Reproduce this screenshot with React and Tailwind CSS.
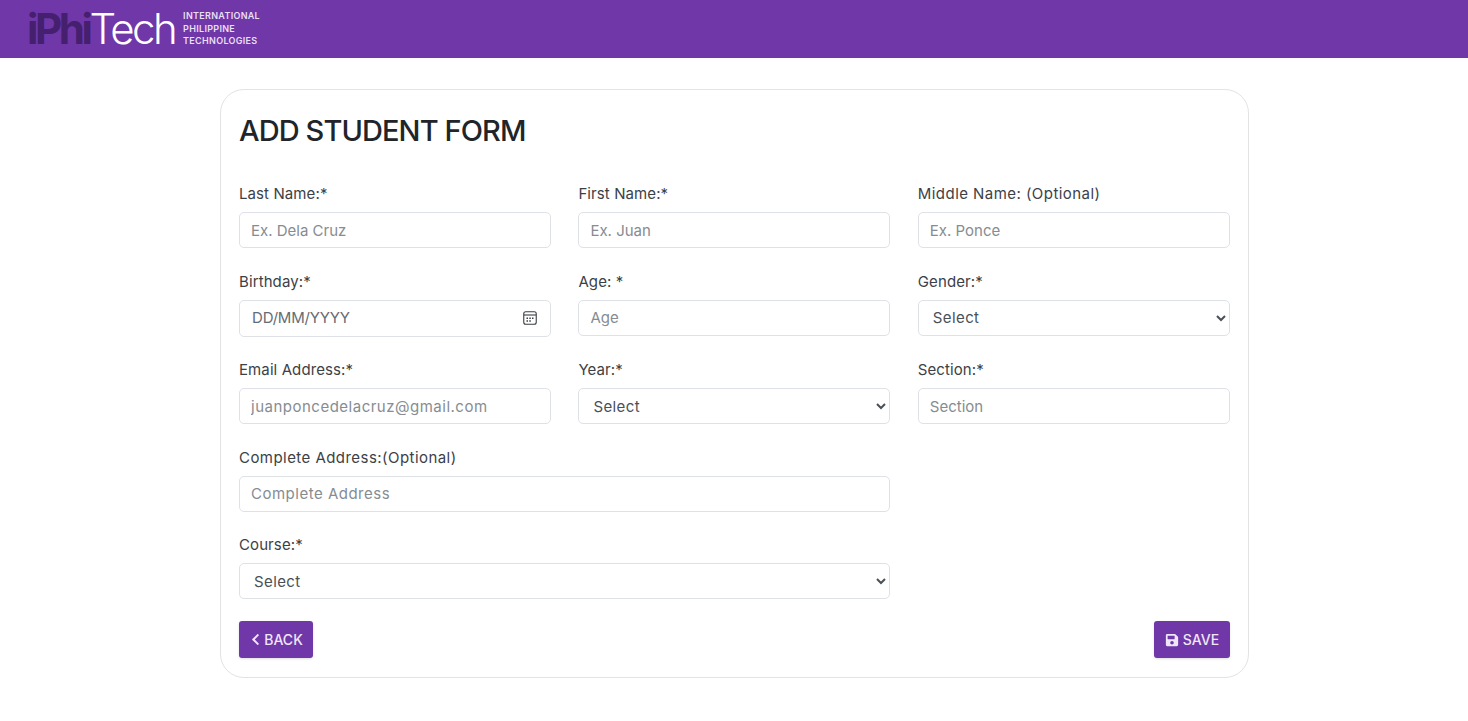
import { FaSave, FaChevronLeft } from "react-icons/fa";

const inputClass =
  "w-full h-[36px] rounded-[5px] border border-[#dee2e6] bg-white px-[11px] text-[15px] text-[#495057] outline-none placeholder:text-[#868c92]";
const selectClass =
  "w-full h-[36px] rounded-[5px] border border-[#dee2e6] bg-white pl-[10px] pr-[4px] text-[15px] tracking-[0.4px] text-[#495057] outline-none";

function Field({ label, wideLabel, className = "", children }) {
  return (
    <div className={`flex flex-col ${className}`}>
      <label
        className={`h-[24px] mb-[6px] text-[15px] leading-[24px] text-[#3c4146] ${
          wideLabel ? "tracking-[0.45px]" : "tracking-[0.1px]"
        }`}
      >
        {label}
      </label>
      {children}
    </div>
  );
}

function TextField({ label, placeholder, wideLabel, widePlaceholder, className }) {
  return (
    <Field label={label} wideLabel={wideLabel} className={className}>
      <input
        type="text"
        placeholder={placeholder}
        className={`${inputClass} ${widePlaceholder ? "tracking-[0.5px]" : ""}`}
      />
    </Field>
  );
}

function SelectField({ label, className }) {
  return (
    <Field label={label} className={className}>
      <select className={selectClass} defaultValue="">
        <option value="">Select</option>
      </select>
    </Field>
  );
}

function CalendarIcon() {
  return (
    <svg width="14" height="14" viewBox="0 0 14 14" fill="none" className="shrink-0">
      <rect x="0.75" y="0.75" width="12.5" height="12.5" rx="2" stroke="#3a3e43" strokeWidth="1.1" />
      <path d="M1 4h12" stroke="#3a3e43" strokeWidth="1.1" />
      <path d="M3.5 6.5h1.5v1.5H3.5zM6.3 6.5h1.5v1.5H6.3zM9 6.5h1.5v1.5H9zM3.5 9.2h1.5v1.5H3.5zM6.3 9.2h1.5v1.5H6.3z" fill="#3a3e43" />
    </svg>
  );
}

function Logo() {
  return (
    <div className="flex items-center ml-[27px]">
      <div className="text-[42px] leading-[58px] font-['Inter',sans-serif]">
        <span className="font-bold tracking-[-3.4px] text-[#45206f]">iPhi</span>
        <span className="font-light tracking-[-2.6px] text-white">Tech</span>
      </div>
      <div className="ml-[8px] flex flex-col text-[9px] leading-[12.5px] font-semibold tracking-[0.3px] text-[#e9dff5]">
        <span>INTERNATIONAL</span>
        <span>PHILIPPINE</span>
        <span>TECHNOLOGIES</span>
      </div>
    </div>
  );
}

export default function App() {
  return (
    <div className="min-h-[721px] bg-white font-['Inter','Liberation_Sans',sans-serif]">
      <header className="h-[58px] bg-[#7037a8] flex items-center">
        <Logo />
      </header>

      <main className="pt-[31px] pl-[220px]">
        <div className="w-[1029px] h-[589px] rounded-[24px] border border-[#e3e3e3] px-[18px] pt-[21px]">
          <h1 className="text-[29px] leading-[40px] font-medium text-[#212529] tracking-[-0.9px]">ADD STUDENT FORM</h1>

          <form className="mt-[31px] grid grid-cols-[repeat(3,312px)] gap-x-[27.4px] gap-y-[21.5px]">
            <TextField label="Last Name:*" placeholder="Ex. Dela Cruz" />
            <TextField label="First Name:*" placeholder="Ex. Juan" />
            <TextField label="Middle Name: (Optional)" placeholder="Ex. Ponce" wideLabel />

            <Field label="Birthday:*">
              <div className="flex items-center justify-between h-[37px] rounded-[5px] border border-[#dee2e6] pl-[12px] pr-[13px] text-[15px] tracking-[-0.2px] text-[#666c73]">
                <span>DD/MM/YYYY</span>
                <CalendarIcon />
              </div>
            </Field>
            <TextField label="Age: *" placeholder="Age" />
            <SelectField label="Gender:*" />

            <TextField label="Email Address:*" placeholder="juanponcedelacruz@gmail.com" widePlaceholder />
            <SelectField label="Year:*" />
            <TextField label="Section:*" placeholder="Section" />

            <TextField label="Complete Address:(Optional)" placeholder="Complete Address" wideLabel widePlaceholder className="col-span-2 col-start-1" />
            <SelectField label="Course:*" className="col-span-2 col-start-1" />
          </form>

          <div className="mt-[22px] flex justify-between">
            <button type="button" className="flex items-center justify-center gap-[2px] w-[74px] h-[37px] rounded-[3px] bg-[#7037a8] text-[14px] font-medium text-[#efe7f7] shadow-sm">
              <FaChevronLeft className="text-[13px]" />
              BACK
            </button>
            <button type="button" className="flex items-center justify-center gap-[4px] w-[76px] h-[37px] rounded-[3px] bg-[#7037a8] text-[14px] font-medium text-[#efe7f7] shadow-sm">
              <FaSave className="text-[14px]" />
              SAVE
            </button>
          </div>
        </div>
      </main>
    </div>
  );
}
